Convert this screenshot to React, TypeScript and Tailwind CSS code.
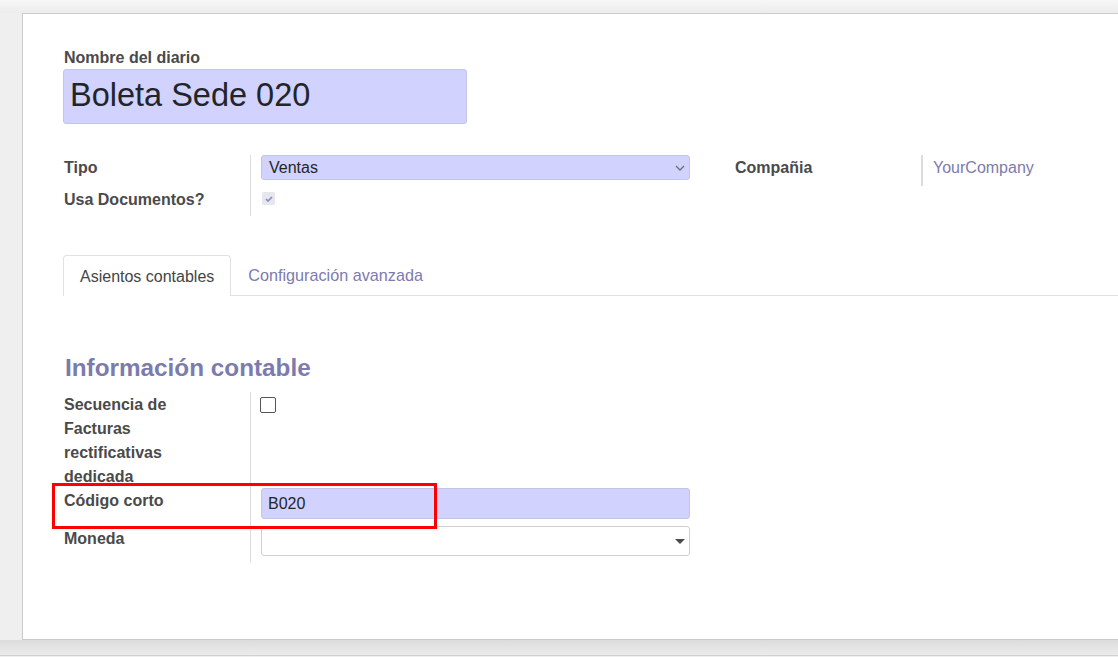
import React from "react";

const font = { fontFamily: '"Liberation Sans", Arial, sans-serif' };

function ChevronDown() {
    return (
        <svg width="10" height="6" viewBox="0 0 10 6" className="text-[#6c6c7c]">
            <path d="M1 1l4 4 4-4" fill="none" stroke="currentColor" strokeWidth="1.3"/>
        </svg>
    );
}

function Caret() {
    return (
        <svg width="10" height="5" viewBox="0 0 10 5">
            <path d="M0 0h10L5 5z" fill="#4a4a4a"/>
        </svg>
    );
}

export default function App() {
    return (
        <div className="relative h-[657px] w-[1118px] overflow-hidden bg-[#efefef] text-[16px]" style={font}>
            <div className="h-[13px] bg-gradient-to-b from-[#f7f7f7] to-[#ececec]"/>
            <div className="flex pl-[22px]">
                <div className="h-[627px] flex-1 border-t border-l border-b border-[#c9c9d3] bg-white pl-[40px] pt-[34px]">
                    {/* titre */}
                    <div className="pl-px text-[16px] font-bold leading-[20px] text-[#4a4a4a]">Nombre del diario</div>
                    <div className="mt-[1px] flex h-[55px] w-[404px] items-center rounded-[3px] border border-[#c4c4e6] bg-[#d2d2ff] pb-[2px] pl-[6px] text-[32.5px] text-[#212529]">
                        Boleta Sede 020
                    </div>

                    {/* grupo principal */}
                    <div className="mt-[31px] flex">
                        <div className="w-[672px]">
                            <div className="flex h-[31px]">
                                <div className="w-[187px] pl-px pt-px font-bold leading-6 text-[#4a4a4a]">Tipo</div>
                                <div className="border-l border-[#dcdcdc] pl-[10px]">
                                    <div className="flex h-[25px] w-[429px] items-center justify-between rounded-[3px] border border-[#c4c4e6] bg-[#d2d2ff] pl-[7px] pr-[4px] text-[#212529]">
                                        <span>Ventas</span>
                                        <ChevronDown/>
                                    </div>
                                </div>
                            </div>
                            <div className="flex h-[30px]">
                                <div className="w-[187px] pl-px pt-[2px] font-bold leading-6 text-[#4a4a4a]">Usa Documentos?</div>
                                <div className="border-l border-[#dcdcdc] pl-[11px] pt-[6px]">
                                    <div className="flex h-[13px] w-[13px] items-center justify-center rounded-[2px] bg-[#e6e6ee]">
                                        <svg width="8" height="6" viewBox="0 0 8 6">
                                            <path d="M1 3l2 2 4-4" fill="none" stroke="#8a89b8" strokeWidth="1.6"/>
                                        </svg>
                                    </div>
                                </div>
                            </div>
                        </div>
                        <div className="flex h-[31px]">
                            <div className="w-[186px] pt-px font-bold leading-6 text-[#4a4a4a]">Compañia</div>
                            <div className="border-l-2 border-[#dcdcdc] pl-[10px] pt-px leading-6 text-[#7c7bad]">YourCompany</div>
                        </div>
                    </div>

                    {/* pestañas */}
                    <div className="mt-[39px] flex h-[41px] border-b border-[#dee2e6]">
                        <div className="-mb-px flex h-[41px] items-center rounded-t-[4px] border border-b-0 border-[#dee2e6] bg-white px-4 pt-px text-[#444]">
                            Asientos contables
                        </div>
                        <div className="flex items-center px-[17px] pt-px text-[16.2px] text-[#7c7bad]">Configuración avanzada</div>
                    </div>

                    <div className="mt-[57px] pl-[2px] text-[24.3px] font-bold leading-[29px] text-[#7c7bad]">Información contable</div>

                    <div className="mt-[10px] w-[672px]">
                        <div className="flex h-[96px]">
                            <div className="w-[187px] pl-px pt-px font-bold leading-6 text-[#4a4a4a]">
                                Secuencia de<br/>Facturas<br/>rectificativas<br/>dedicada
                            </div>
                            <div className="border-l border-[#dcdcdc] pl-[9px] pt-[5px]">
                                <div className="h-[16px] w-[16px] rounded-[2px] border-[1.5px] border-[#555]"/>
                            </div>
                        </div>
                        <div className="relative flex h-[38px]">
                            <div className="w-[187px] pl-px pt-px font-bold leading-6 text-[#4a4a4a]">Código corto</div>
                            <div className="border-l border-[#dcdcdc] pl-[10px]">
                                <div className="flex h-[31px] w-[429px] items-center rounded-[3px] border border-[#c4c4e6] bg-[#d2d2ff] pl-[6px] text-[#212529]">
                                    B020
                                </div>
                            </div>
                            <div className="absolute left-[-11px] top-[-5px] h-[46px] w-[385px] border-[3px] border-[#ff0000]"/>
                        </div>
                        <div className="flex h-[37px]">
                            <div className="w-[187px] pl-px pt-px font-bold leading-6 text-[#4a4a4a]">Moneda</div>
                            <div className="border-l border-[#dcdcdc] pl-[10px]">
                                <div className="flex h-[30px] w-[429px] items-center justify-end rounded-[3px] border border-[#d0d0d0] bg-white pr-[4px]">
                                    <Caret/>
                                </div>
                            </div>
                        </div>
                    </div>
                </div>
            </div>
            <div className="h-[15px] bg-gradient-to-b from-[#dcdcdc] to-[#ececec]"/>
            <div className="h-px bg-[#d0d0d0]"/>
        </div>
    );
}
